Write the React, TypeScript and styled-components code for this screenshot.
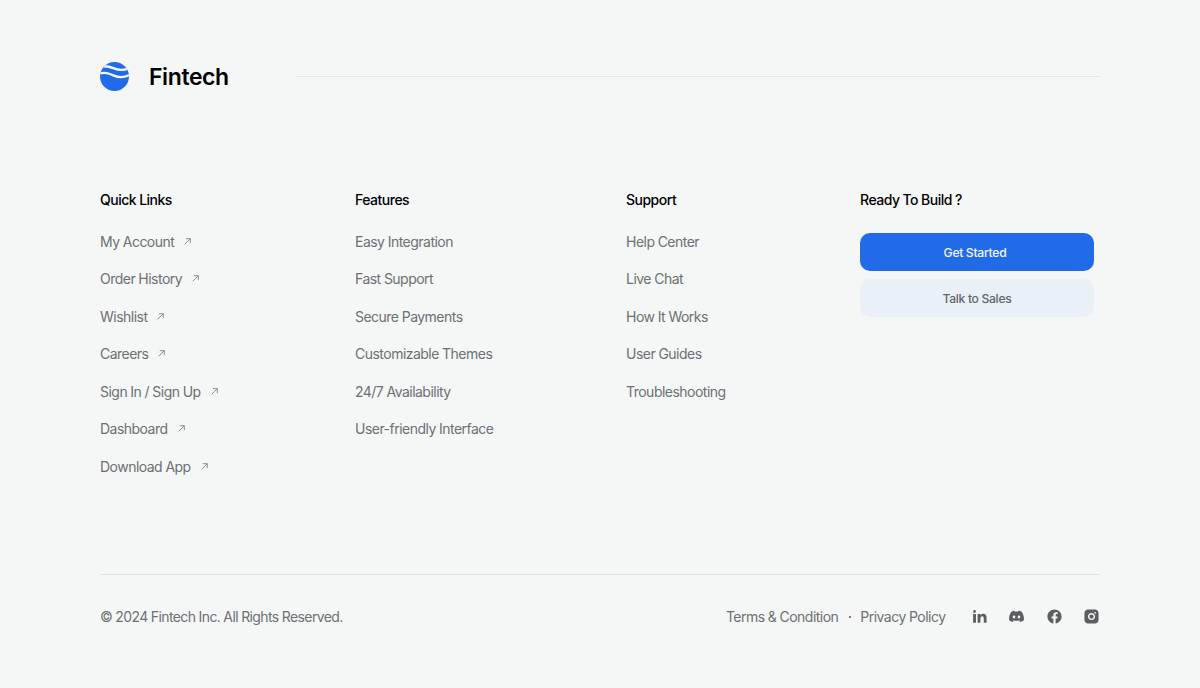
import styled, { createGlobalStyle } from 'styled-components';
import { RiLinkedinFill, RiDiscordFill, RiFacebookCircleFill, RiInstagramFill } from 'react-icons/ri';

const GlobalStyle = createGlobalStyle`
  html, body {
    margin: 0;
    padding: 0;
    background: #f5f7f7;
  }
  * {
    box-sizing: border-box;
  }
`;

const Footer = styled.footer`
  width: 1200px;
  height: 688px;
  padding: 0 100px;
  display: flex;
  flex-direction: column;
  background: #f5f7f7;
  font-family: Inter, 'Liberation Sans', sans-serif;
  color: #5f6366;
`;

const TopRow = styled.div`
  height: 153px;
  display: flex;
  align-items: center;
`;

const Brand = styled.div`
  width: 195px;
  display: flex;
  align-items: center;
  gap: 20px;
`;

const BrandName = styled.span`
  font-size: 23px;
  font-weight: 600;
  letter-spacing: -0.4px;
  color: #000;
`;

const TopLine = styled.div`
  flex: 1;
  height: 1px;
  background: #e3e6e6;
`;

const Columns = styled.div`
  margin-top: 37px;
  height: 384px;
  display: grid;
  grid-template-columns: 255px 271px 234px 240px;
  align-content: start;
`;

const Column = styled.div`
  display: flex;
  flex-direction: column;
`;

const Heading = styled.h3`
  margin: 0 0 12.6px;
  height: 20px;
  line-height: 20px;
  font-size: 14px;
  font-weight: 500;
  letter-spacing: -0.5px;
  word-spacing: -0.2px;
  color: #000;
`;

const LinkList = styled.ul`
  margin: 0;
  padding: 0;
  list-style: none;
`;

const LinkItem = styled.li`
  height: 37.5px;
  display: flex;
  align-items: center;
  gap: 10px;
  font-size: 14px;
  letter-spacing: -0.52px;
  word-spacing: -0.2px;
  color: #6c7073;
`;

const Arrow = styled.svg`
  width: 7px;
  height: 7px;
  color: #808385;
`;

const Buttons = styled.div`
  margin-top: 10.5px;
  width: 234px;
  display: flex;
  flex-direction: column;
  gap: 8px;
`;

const Button = styled.button<{ $primary?: boolean }>`
  height: 38px;
  border: 0;
  border-radius: 10px;
  padding: 0 ${(p) => (p.$primary ? '4px' : '0')} 0 0;
  font-family: inherit;
  font-size: 12.2px;
  font-weight: 500;
  letter-spacing: -0.3px;
  word-spacing: -0.2px;
  background: ${(p) => (p.$primary ? '#226be8' : '#e9f0f8')};
  color: ${(p) => (p.$primary ? '#f2f6fd' : '#63676b')};
`;

const BottomRow = styled.div`
  height: 84px;
  border-top: 1px solid #e1e4e4;
  display: flex;
  align-items: center;
  justify-content: space-between;
  font-size: 14px;
  letter-spacing: -0.52px;
  word-spacing: -0.2px;
  color: #6c7073;
`;

const BottomRight = styled.div`
  display: flex;
  align-items: center;
`;

const Legal = styled.span``;

const Copyright = styled.span`
  letter-spacing: -0.6px;
`;

const Dot = styled.span`
  width: 2px;
  height: 2px;
  margin: 0 9px 0 11px;
  border-radius: 50%;
  background: #555;
`;

const Socials = styled.div`
  margin-left: 25px;
  display: flex;
  align-items: center;
  gap: 20.5px;
  color: #5b5f62;
  font-size: 17px;

  svg {
    display: block;
  }
`;

const links = ['My Account', 'Order History', 'Wishlist', 'Careers', 'Sign In / Sign Up', 'Dashboard', 'Download App'];
const features = ['Easy Integration', 'Fast Support', 'Secure Payments', 'Customizable Themes', '24/7 Availability', 'User-friendly Interface'];
const support = ['Help Center', 'Live Chat', 'How It Works', 'User Guides', 'Troubleshooting'];

function Logo() {
  return (
    <svg width="29" height="29" viewBox="0 0 29 29">
      <defs>
        <clipPath id="logo-clip">
          <circle cx="14.5" cy="14.5" r="14.5" />
        </clipPath>
      </defs>
      <g clipPath="url(#logo-clip)">
        <rect width="29" height="29" fill="#226be8" />
        <path d="M-1 5C5 3.2 9 4.4 14 6.4s10 2.2 16-.6" fill="none" stroke="#f5f7f7" strokeWidth="2.4" />
        <path d="M-1 11.6C5 9.8 9 11.4 14 13.6s10 2.2 16-.8" fill="none" stroke="#f5f7f7" strokeWidth="2.4" />
      </g>
    </svg>
  );
}

function ArrowIcon() {
  return (
    <Arrow viewBox="0 0 7 7" fill="none" stroke="currentColor" strokeWidth="0.9">
      <path d="M0.7 6.3 6.3 0.7M1.8 0.7h4.5v4.5" />
    </Arrow>
  );
}

export default function App() {
  return (
    <>
      <GlobalStyle />
      <Footer>
        <TopRow>
          <Brand>
            <Logo />
            <BrandName>Fintech</BrandName>
          </Brand>
          <TopLine />
        </TopRow>
        <Columns>
          <Column>
            <Heading>Quick Links</Heading>
            <LinkList>
              {links.map((l) => (
                <LinkItem key={l}>
                  {l}
                  <ArrowIcon />
                </LinkItem>
              ))}
            </LinkList>
          </Column>
          <Column>
            <Heading>Features</Heading>
            <LinkList>
              {features.map((l) => (
                <LinkItem key={l}>{l}</LinkItem>
              ))}
            </LinkList>
          </Column>
          <Column>
            <Heading>Support</Heading>
            <LinkList>
              {support.map((l) => (
                <LinkItem key={l}>{l}</LinkItem>
              ))}
            </LinkList>
          </Column>
          <Column>
            <Heading>Ready To Build ?</Heading>
            <Buttons>
              <Button $primary>Get Started</Button>
              <Button>Talk to Sales</Button>
            </Buttons>
          </Column>
        </Columns>
        <BottomRow>
          <Copyright>© 2024 Fintech Inc. All Rights Reserved.</Copyright>
          <BottomRight>
            <Legal>Terms &amp; Condition</Legal>
            <Dot />
            <Legal>Privacy Policy</Legal>
            <Socials>
              <RiLinkedinFill />
              <RiDiscordFill />
              <RiFacebookCircleFill />
              <RiInstagramFill />
            </Socials>
          </BottomRight>
        </BottomRow>
      </Footer>
    </>
  );
}
